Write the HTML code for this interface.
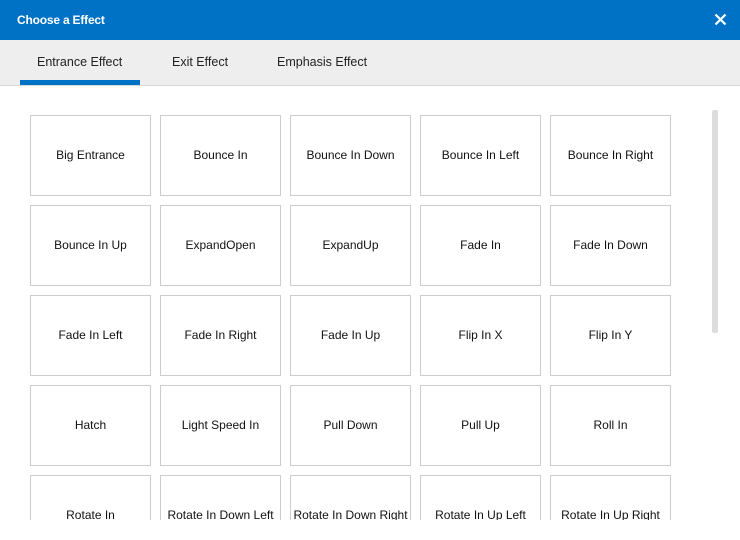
<!DOCTYPE html><html style="overflow:hidden;height:540px"><head><style>
body{margin:0;width:740px;height:540px;overflow:hidden;background:#fff;font-family:"Liberation Sans",sans-serif;position:relative}
.hd{position:absolute;left:0;top:0;width:740px;height:40px;background:#0072c6;color:#fff}
.hd b{position:absolute;left:17px;top:13px;font-size:12px;letter-spacing:-0.2px}
.x{position:absolute;left:714px;top:13px}
.tb{position:absolute;top:40px;left:0;width:740px;height:45px;background:#eee;border-bottom:1px solid #d8d8d8}
.tb span{position:absolute;top:15px;font-size:12.5px;color:#222}
.ul{position:absolute;left:20px;top:40px;width:120px;height:5px;background:#0072c6}
.c{position:absolute;width:119px;border:1px solid #ccc;display:flex;align-items:center;justify-content:center;font-size:12px;color:#111;white-space:nowrap;padding-bottom:2px;box-sizing:content-box;height:77px}
.sb{position:absolute;left:712px;top:110px;width:6px;height:223px;background:#ddd;border-radius:2px}
.clip{position:absolute;left:0;top:520px;width:740px;height:20px;background:#fff}
</style></head><body>
<div class="hd"><b>Choose a Effect</b><svg class="x" width="13" height="13"><path d="M1.5 1.5L11.5 11.5M11.5 1.5L1.5 11.5" stroke="#fff" stroke-width="2.2"/></svg></div>
<div class="tb"><span style="left:37px">Entrance Effect</span><span style="left:172px">Exit Effect</span><span style="left:277px">Emphasis Effect</span><div class="ul"></div></div>
<div class="sb"></div>
<div id="g"></div>
<div class="clip"></div>
<script>
var n=["Big Entrance","Bounce In","Bounce In Down","Bounce In Left","Bounce In Right","Bounce In Up","ExpandOpen","ExpandUp","Fade In","Fade In Down","Fade In Left","Fade In Right","Fade In Up","Flip In X","Flip In Y","Hatch","Light Speed In","Pull Down","Pull Up","Roll In","Rotate In","Rotate In Down Left","Rotate In Down Right","Rotate In Up Left","Rotate In Up Right"],h="";
n.forEach(function(t,i){h+='<div class="c" style="left:'+(30+130*(i%5))+'px;top:'+(115+90*Math.floor(i/5))+'px">'+t+'</div>'});
document.getElementById("g").innerHTML=h;
</script>
</body></html>
